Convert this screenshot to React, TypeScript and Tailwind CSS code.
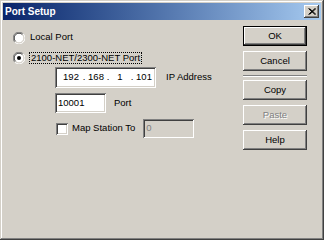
import React from "react"

const raised =
    "shadow-[inset_-1px_-1px_#404040,inset_1px_1px_#ffffff,inset_-2px_-2px_#808080,inset_2px_2px_#d4d0c8]"
const sunken =
    "shadow-[inset_1px_1px_#808080,inset_-1px_-1px_#ffffff,inset_2px_2px_#404040,inset_-2px_-2px_#d4d0c8]"

function Radio({ checked }: { checked?: boolean }) {
    return (
        <svg width="12" height="12" viewBox="0 0 12 12" className="shrink-0">
            <circle cx="6" cy="6" r="5" fill="#ffffff" />
            <path d="M1.8 10.2 A5.5 5.5 0 0 1 10.2 1.8" fill="none" stroke="#808080" />
            <path d="M2.6 9.4 A4.5 4.5 0 0 1 9.4 2.6" fill="none" stroke="#404040" />
            <path d="M10.2 1.8 A5.5 5.5 0 0 1 1.8 10.2" fill="none" stroke="#ffffff" />
            <path d="M9.4 2.6 A4.5 4.5 0 0 1 2.6 9.4" fill="none" stroke="#d4d0c8" />
            {checked && <circle cx="6" cy="6" r="2" fill="#000000" />}
        </svg>
    )
}

function Button({ label, isDefault, disabled }: { label: string; isDefault?: boolean; disabled?: boolean }) {
    const inner = (
        <div
            className={`flex h-full w-full items-center justify-center bg-[#d4d0c8] ${raised} ${
                disabled ? "text-[#808080] [text-shadow:1px_1px_#ffffff]" : "text-black"
            }`}
        >
            {label}
        </div>
    )
    if (isDefault) {
        return <div className="h-[20px] w-[64px] border border-black">{inner}</div>
    }
    return <div className="h-[20px] w-[64px]">{inner}</div>
}

export default function App() {
    return (
        <div
            className="flex h-[240px] w-[324px] flex-col bg-[#d4d0c8] p-[3px] text-[9.5px] text-black shadow-[inset_-1px_-1px_#404040,inset_1px_1px_#d4d0c8,inset_-2px_-2px_#808080,inset_2px_2px_#ffffff]"
            style={{ fontFamily: '"Liberation Sans", Arial, sans-serif' }}
        >
            {/* Title bar */}
            <div className="flex h-[17px] items-center bg-gradient-to-r from-[#0a246a] to-[#a6caf0] pl-[2px] pr-[2px]">
                <span className="text-[10px] font-bold text-white">Port Setup</span>
                <div className={`ml-auto flex h-[13px] w-[15px] items-center justify-center bg-[#d4d0c8] ${raised}`}>
                    <svg width="8" height="7" viewBox="0 0 8 7">
                        <path d="M0.5 0.5 L7 6.5 M1.5 0.5 L8 6.5 M7 0.5 L0.5 6.5 M8 0.5 L1.5 6.5" stroke="#000" strokeWidth="1" />
                    </svg>
                </div>
            </div>

            <div className="flex flex-1">
                {/* Left side */}
                <div className="flex flex-col pl-[10px] pt-[11px]">
                    <div className="flex h-[13px] items-center gap-[5px]">
                        <Radio />
                        <span>Local Port</span>
                    </div>
                    <div className="mt-[7px] flex h-[13px] items-center gap-[4px]">
                        <Radio checked />
                        <span className="border border-dotted border-black px-[1px] leading-[10px]">
                            2100-NET/2300-NET Port
                        </span>
                    </div>

                    <div className="ml-[42px] mt-[3px] flex items-center">
                        <div className={`flex h-[21px] w-[101px] items-center bg-white pl-[5px] ${sunken}`}>
                            <span className="w-[22px] text-center">192</span>
                            <span className="w-[4px] text-center">.</span>
                            <span className="w-[20px] text-center">168</span>
                            <span className="w-[4px] text-center">.</span>
                            <span className="w-[20px] text-center">1</span>
                            <span className="w-[4px] text-center">.</span>
                            <span className="w-[20px] text-center">101</span>
                        </div>
                        <span className="ml-[10px]">IP Address</span>
                    </div>

                    <div className="ml-[42px] mt-[5px] flex items-center">
                        <div className={`flex h-[20px] w-[51px] items-center bg-white px-[3px] ${sunken}`}>10001</div>
                        <span className="ml-[8px]">Port</span>
                    </div>

                    <div className="ml-[43px] mt-[6px] flex items-center">
                        <div className={`h-[12px] w-[12px] bg-white ${sunken}`} />
                        <span className="ml-[4px]">Map Station To</span>
                        <div
                            className={`ml-[8px] flex h-[19px] w-[51px] items-center bg-[#d4d0c8] px-[3px] text-[#808080] ${sunken}`}
                        >
                            0
                        </div>
                    </div>
                </div>

                {/* Right side buttons */}
                <div className="ml-auto mr-[14px] flex flex-col pt-[6px]">
                    <Button label="OK" isDefault />
                    <div className="mt-[5px]">
                        <Button label="Cancel" />
                    </div>
                    <div className="mt-[4px] h-[2px] w-[64px] border-t border-b border-t-[#808080] border-b-white" />
                    <div className="mt-[3px] flex flex-col gap-[5px]">
                        <Button label="Copy" />
                        <Button label="Paste" disabled />
                        <Button label="Help" />
                    </div>
                </div>
            </div>
        </div>
    )
}
